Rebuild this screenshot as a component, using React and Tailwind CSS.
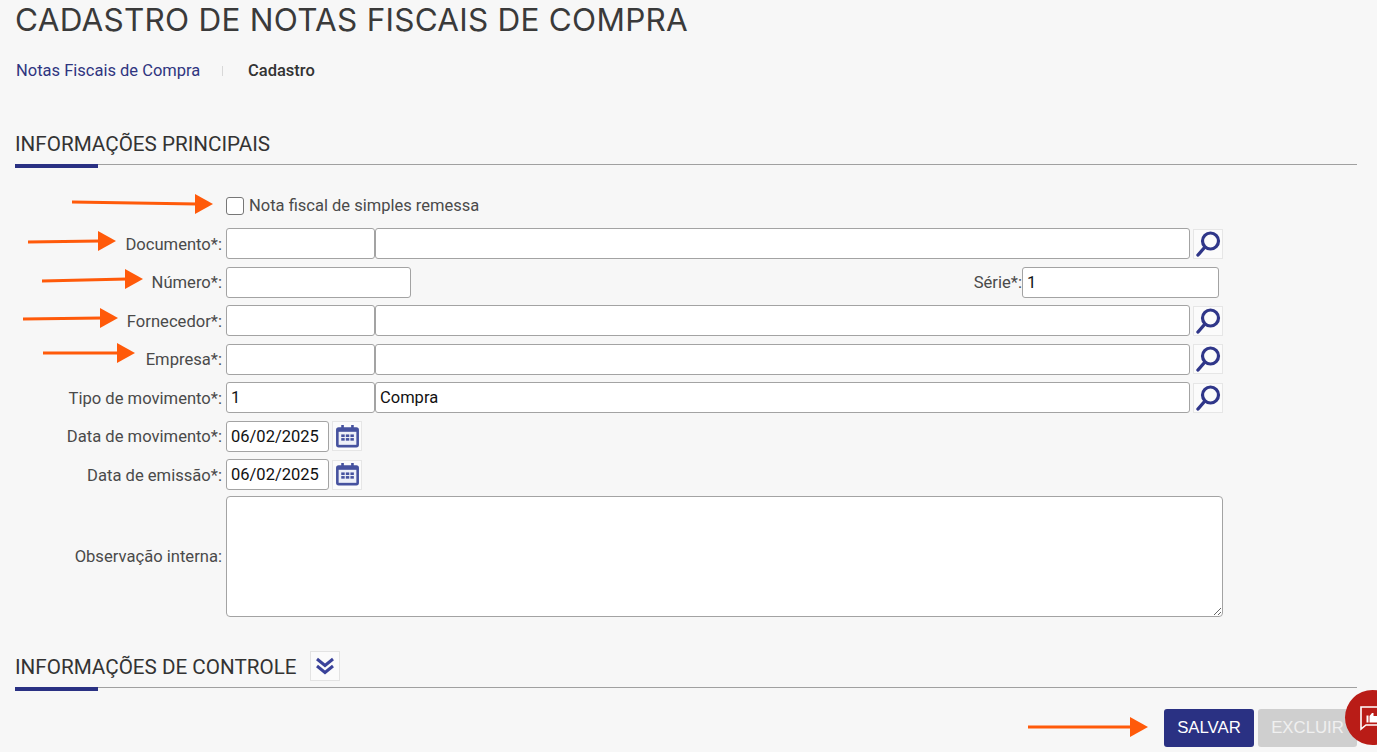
import React from 'react';

const inputClass = 'h-[31px] border border-[#a3a3a3] rounded-[3px] bg-white px-[4px] text-[16.5px] text-[#111] outline-none';

const SearchButton = () => (
    <button className="ml-[3px] w-[30px] h-[30px] flex items-center justify-center bg-[#fbfbfb] border border-[#e6e6e6]">
        <svg width="26" height="26" viewBox="0 0 26 26" fill="none" stroke="#2f3689" strokeLinecap="round">
            <circle cx="15.5" cy="10" r="8" strokeWidth="3.2" />
            <path d="M9.5 16.5 L3 24" strokeWidth="3.4" />
        </svg>
    </button>
);

const CalendarButton = () => (
    <button className="ml-[3px] w-[30px] h-[30px] flex items-center justify-center bg-[#fbfbfb] border border-[#e6e6e6]">
        <svg width="25" height="25" viewBox="0 0 24 24" fill="#46529f">
            <path d="M1 5.5a2.5 2.5 0 0 1 2.5-2.5H6V1h2.5v2h7V1H18v2h2.500a2.500 2.500 0 0 1 2.500 2.500V20a2.500 2.500 0 0 1-2.500 2.500h-17A2.500 2.500 0 0 1 1 20z" />
            <rect x="3.500" y="7.500" width="17" height="12.500" fill="#eef0f8" />
            <rect x="6" y="10" width="3.300" height="2.500" />
            <rect x="10.400" y="10" width="3.300" height="2.500" />
            <rect x="14.800" y="10" width="3.300" height="2.500" />
            <rect x="6" y="13.500" width="3.300" height="2.500" />
            <rect x="10.400" y="13.500" width="3.300" height="2.500" />
            <rect x="14.800" y="13.500" width="3.300" height="2.500" />
        </svg>
    </button>
);

const Arrow = ({ x1, y1, x2, y2 }) => (
    <svg className="absolute left-0 top-0 pointer-events-none" width="1377" height="752">
        <line x1={x1} y1={y1} x2={x2 - 16} y2={y2} stroke="#ff5a0a" strokeWidth="3" />
        <polygon points={`${x2},${y2} ${x2 - 18},${y2 - 10} ${x2 - 18},${y2 + 10}`} fill="#ff5a0a" />
    </svg>
);

const Label = ({ children }) => (
    <label className="w-[222px] mr-[4px] pt-[3px] text-right text-[16.6px] text-[#4a4a4a] shrink-0">{children}</label>
);

const LookupRow = ({ label, code = '', name = '' }) => (
    <div className="flex items-center h-[31px]">
        <Label>{label}</Label>
        <input readOnly value={code} className={`${inputClass} w-[149px]`} />
        <input readOnly value={name} className={`${inputClass} w-[815px]`} />
        <SearchButton />
    </div>
);

const DateRow = ({ label }) => (
    <div className="flex items-center h-[31px]">
        <Label>{label}</Label>
        <input readOnly value="06/02/2025" className={`${inputClass} w-[103px]`} />
        <CalendarButton />
    </div>
);

const SectionTitle = ({ children }) => (
    <div className="relative border-b border-[#a0a0a0] flex items-end">
        {children}
        <div className="absolute left-0 bottom-[-4px] w-[83px] h-[4px] bg-[#2a3183]" />
    </div>
);

export default function App() {
    return (
        <div className="relative w-[1377px] h-[752px] overflow-hidden bg-[#f7f7f7] font-['Roboto',sans-serif]">
            <div className="pl-[15px] pr-[20px]">
                <h1 className="h-[41px] pt-[2px] font-['Inter',sans-serif] text-[31.500px] leading-[36px] tracking-[0.25px] text-[#3a3a3a]">
                    CADASTRO DE NOTAS FISCAIS DE COMPRA
                </h1>
                <div className="mt-[20px] h-[20px] flex items-center text-[16.5px]">
                    <a className="text-[#2f3580] w-[207px] pl-px">Notas Fiscais de Compra</a>
                    <span className="w-px h-[10px] bg-[#d8d8d8] mr-[25px]" />
                    <span className="font-medium text-[#333]">Cadastro</span>
                </div>
                <div className="mt-[45px]">
                    <SectionTitle>
                        <h2 className="h-[38px] pt-[5px] text-[20.650px] leading-[26px] text-[#333]">INFORMAÇÕES PRINCIPAIS</h2>
                    </SectionTitle>
                </div>
            </div>

            <div className="mt-[30px] flex flex-col gap-[7.5px]">
                <div className="flex items-center h-[22px] pl-[226px] mb-[3.5px]">
                    <span className="w-[18px] h-[18px] rounded-[3px] border border-[#777] bg-white mr-[5px]" />
                    <span className="text-[16.5px] text-[#4a4a4a]">Nota fiscal de simples remessa</span>
                </div>
                <LookupRow label="Documento*:" />
                <div className="flex items-center h-[31px]">
                    <Label>Número*:</Label>
                    <input readOnly value="" className={`${inputClass} w-[185px]`} />
                    <label className="w-[611px] pt-[2px] text-right text-[16.6px] text-[#4a4a4a]">Série*:</label>
                    <input readOnly value="1" className={`${inputClass} w-[197px]`} />
                </div>
                <LookupRow label="Fornecedor*:" />
                <LookupRow label="Empresa*:" />
                <LookupRow label="Tipo de movimento*:" code="1" name="Compra" />
                <DateRow label="Data de movimento*:" />
                <DateRow label="Data de emissão*:" />
                <div className="flex items-center -mt-[2px]">
                    <Label>Observação interna:</Label>
                    <textarea readOnly className="w-[997px] h-[121px] border border-[#a3a3a3] rounded-[4px] bg-white" />
                </div>
            </div>

            <div className="pl-[15px] pr-[20px] mt-[32px]">
                <SectionTitle>
                    <div className="h-[38px] pt-[2px] flex items-start">
                        <h2 className="text-[20.650px] leading-[32px] text-[#333]">INFORMAÇÕES DE CONTROLE</h2>
                        <button className="ml-[13px] w-[30px] h-[30px] flex items-center justify-center bg-[#fbfbfb] border border-[#e3e3e3]">
                            <svg width="22" height="22" viewBox="0 0 22 22" fill="none" stroke="#3a429a" strokeWidth="3">
                                <path d="M3 4 L11 10.5 L19 4" />
                                <path d="M3 11 L11 17.5 L19 11" />
                            </svg>
                        </button>
                    </div>
                </SectionTitle>
                <div className="mt-[21px] flex justify-end gap-[4px] text-[16.800px]">
                    <button className="w-[90px] h-[38px] rounded-[3px] bg-[#2a3183] text-white font-['Liberation_Sans',sans-serif]">SALVAR</button>
                    <button className="w-[99px] h-[38px] rounded-[3px] bg-[#cfcfcf] text-[#f0f0f0] font-['Liberation_Sans',sans-serif]">EXCLUIR</button>
                </div>
            </div>

            <Arrow x1={72} y1={202} x2={213} y2={204} />
            <Arrow x1={28} y1={242} x2={116} y2={241} />
            <Arrow x1={42} y1={281} x2={143} y2={279} />
            <Arrow x1={23} y1={319} x2={118} y2={318} />
            <Arrow x1={43} y1={353} x2={135} y2={353} />
            <Arrow x1={1028} y1={727} x2={1148} y2={727} />

            <div className="absolute left-[1345px] top-[690px] w-[55px] h-[55px] rounded-full bg-[#b91c17] flex items-center pl-[15px]">
                <svg width="17" height="26" viewBox="0 0 17 26" fill="none" stroke="#fff" strokeWidth="1.6">
                    <path d="M17 2 H1 V24 L6 20 H17" />
                    <path d="M6.500 10.500 H8.500 V17.500 H6.500 Z M9.500 11 L12 8 L13.500 8 V11 H17 V17.500 H9.500 Z" fill="#fff" stroke="none" />
                </svg>
            </div>
        </div>
    );
}
